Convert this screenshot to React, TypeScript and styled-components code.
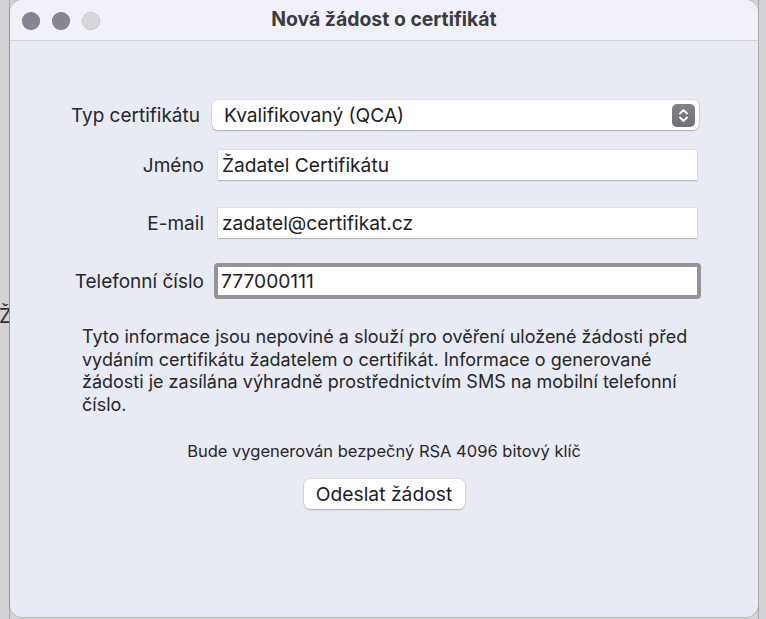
import React from "react";
import styled, { createGlobalStyle } from "styled-components";

const Global = createGlobalStyle`
  html, body { margin: 0; padding: 0; }
  body {
    width: 766px;
    height: 619px;
    overflow: hidden;
    background: #d3d3d7;
    font-family: Inter, "Noto Sans", "DejaVu Sans", sans-serif;
    -webkit-font-smoothing: antialiased;
  }
`;

const Desk = styled.div`
  display: grid;
  grid-template-columns: 10px 748px 8px;
  height: 619px;
  overflow: hidden;
`;

const SideStrip = styled.div<{ $side: "left" | "right" }>`
  background: #d2d2d6;
  overflow: hidden;
  border-${(p) => (p.$side === "left" ? "right" : "left")}: 1px solid #a9a9ae;
`;

const BehindText = styled.div`
  margin-top: 304px;
  margin-left: -1px;
  font-size: 20px;
  color: #2c2c2e;
  line-height: 24px;
`;

const Window = styled.div`
  height: 617px;
  background: #e9ebf4;
  border-radius: 12px;
  overflow: hidden;
  display: flex;
  flex-direction: column;
  box-shadow: 0 0 0 0.5px rgba(0, 0, 0, 0.25);
`;

const TitleBar = styled.div`
  height: 40px;
  flex: none;
  display: grid;
  grid-template-columns: 1fr auto 1fr;
  align-items: center;
  background: #f0f1f9;
  border-bottom: 1px solid #d2d3da;
`;

const Lights = styled.div`
  display: flex;
  gap: 12px;
  padding-left: 12px;
  padding-top: 1px;
`;

const Light = styled.span<{ $dim?: boolean }>`
  width: 18px;
  height: 18px;
  border-radius: 50%;
  background: ${(p) => (p.$dim ? "#d6d6dc" : "#86868d")};
  box-shadow: inset 0 0 0 0.5px rgba(0, 0, 0, 0.15);
`;

const Title = styled.div`
  font-weight: 700;
  font-size: 19.4px;
  color: #3b3b3e;
  padding-bottom: 2px;
`;

const Body = styled.div`
  padding-top: 59px;
  display: flex;
  flex-direction: column;
`;

const Row = styled.div<{ $mt?: number }>`
  display: flex;
  align-items: center;
  margin-top: ${(p) => p.$mt ?? 0}px;
`;

const Label = styled.div<{ $inset?: number }>`
  width: ${(p) => 194 - (p.$inset ?? 0)}px;
  margin-right: ${(p) => p.$inset ?? 0}px;
  flex: none;
  text-align: right;
  font-size: 19px;
  color: #262628;
`;

const Select = styled.div`
  margin-left: 8px;
  width: 487px;
  height: 30px;
  box-sizing: border-box;
  background: #fff;
  border-radius: 6px;
  box-shadow: 0 0 0 0.5px rgba(0, 0, 0, 0.12), 0 1px 1.5px rgba(0, 0, 0, 0.22);
  display: flex;
  align-items: center;
  justify-content: space-between;
  padding: 0 4px 0 12px;
  font-size: 19.2px;
  color: #1d1d1f;
`;

const Stepper = styled.div`
  width: 23px;
  height: 23px;
  border-radius: 5px;
  background: linear-gradient(#828286, #717175);
  display: flex;
  align-items: center;
  justify-content: center;
`;

const Field = styled.div<{ $focused?: boolean }>`
  box-sizing: border-box;
  background: #fff;
  display: flex;
  align-items: center;
  font-size: 19.2px;
  color: #1d1d1f;
  ${(p) =>
    p.$focused
      ? `
    margin-left: 10px;
    width: 487px;
    height: 36px;
    border: 4.5px solid #949498;
    border-radius: 4px;
    padding-left: 3px;
  `
      : `
    margin-left: 14px;
    width: 479px;
    height: 30px;
    padding-left: 4px;
    box-shadow: 0 0 0 0.5px rgba(0,0,0,0.1), 0 1px 1px rgba(0,0,0,0.18);
  `}
`;

const Info = styled.p`
  margin: 27px 0 0 72px;
  width: 640px;
  font-size: 18px;
  line-height: 22.5px;
  color: #262628;
  white-space: nowrap;
`;

const KeyNote = styled.div`
  margin-top: 25px;
  text-align: center;
  font-size: 16.5px;
  color: #262628;
`;

const ButtonRow = styled.div`
  display: flex;
  justify-content: center;
  margin-top: 18px;
`;

const Button = styled.button`
  width: 161px;
  height: 30px;
  border: none;
  background: #fff;
  border-radius: 6px;
  box-shadow: 0 0 0 0.5px rgba(0, 0, 0, 0.12), 0 1px 1.5px rgba(0, 0, 0, 0.22);
  font-family: inherit;
  font-size: 19.3px;
  color: #1d1d1f;
  padding: 0;
`;

export default function App() {
  return (
    <>
      <Global />
      <Desk>
        <SideStrip $side="left">
          <BehindText>Ž</BehindText>
        </SideStrip>
        <Window>
          <TitleBar>
            <Lights>
              <Light />
              <Light />
              <Light $dim />
            </Lights>
            <Title>Nová žádost o certifikát</Title>
            <div />
          </TitleBar>
          <Body>
            <Row>
              <Label $inset={4}>Typ certifikátu</Label>
              <Select>
                <span>Kvalifikovaný (QCA)</span>
                <Stepper>
                  <svg width="13" height="17" viewBox="0 0 13 17" fill="none">
                    <path d="M3 6.5 L6.5 3 L10 6.5" stroke="#fff" strokeWidth="1.8" strokeLinecap="round" strokeLinejoin="round" />
                    <path d="M3 10.5 L6.5 14 L10 10.5" stroke="#fff" strokeWidth="1.8" strokeLinecap="round" strokeLinejoin="round" />
                  </svg>
                </Stepper>
              </Select>
            </Row>
            <Row $mt={20}>
              <Label>Jméno</Label>
              <Field>Žadatel Certifikátu</Field>
            </Row>
            <Row $mt={28}>
              <Label>E-mail</Label>
              <Field>zadatel@certifikat.cz</Field>
            </Row>
            <Row $mt={25}>
              <Label>Telefonní číslo</Label>
              <Field $focused>777000111</Field>
            </Row>
            <Info>
              Tyto informace jsou nepoviné a slouží pro ověření uložené žádosti před
              <br />
              vydáním certifikátu žadatelem o certifikát. Informace o generované
              <br />
              žádosti je zasílána výhradně prostřednictvím SMS na mobilní telefonní
              <br />
              číslo.
            </Info>
            <KeyNote>Bude vygenerován bezpečný RSA 4096 bitový klíč</KeyNote>
            <ButtonRow>
              <Button>Odeslat žádost</Button>
            </ButtonRow>
          </Body>
        </Window>
        <SideStrip $side="right" />
      </Desk>
    </>
  );
}
